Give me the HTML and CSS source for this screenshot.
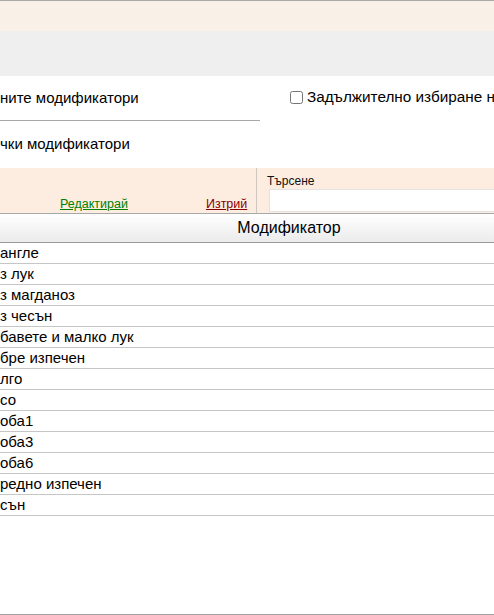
FILE: index.html
```html
<!DOCTYPE html>
<html lang="bg">
<head>
<meta charset="utf-8">
<link rel="stylesheet" href="styles.css">
</head>
<body>
<div class="page">
  <div class="topbar"></div>
  <div class="graybar"></div>
  <div class="options">
    <div class="opt-row">
      <div class="opt-left"><span class="opt-label">ните модификатори</span></div>
      <label class="opt-check"><input type="checkbox"> Задължително избиране н</label>
    </div>
    <div class="opt-row2"><span class="opt-label">чки модификатори</span></div>
  </div>
  <div class="toolbar">
    <div class="actions">
      <a class="link edit" href="#">Редактирай</a>
      <a class="link del" href="#">Изтрий</a>
    </div>
    <div class="search">
      <div class="search-label">Търсене</div>
      <input class="search-input" type="text">
    </div>
  </div>
  <div class="grid">
    <div class="grid-head">Модификатор</div>
    <div class="grid-row">англе</div>
    <div class="grid-row">з лук</div>
    <div class="grid-row">з магданоз</div>
    <div class="grid-row">з чесън</div>
    <div class="grid-row">бавете и малко лук</div>
    <div class="grid-row">бре изпечен</div>
    <div class="grid-row">лго</div>
    <div class="grid-row">со</div>
    <div class="grid-row">оба1</div>
    <div class="grid-row">оба3</div>
    <div class="grid-row">оба6</div>
    <div class="grid-row">редно изпечен</div>
    <div class="grid-row">сън</div>
    <div class="grid-empty"></div>
  </div>
</div>
</body>
</html>
```
FILE: styles.css
```css
html, body {
  margin: 0;
  padding: 0;
  background: #fff;
  overflow: hidden;
}
body {
  font-family: "Liberation Sans", Arial, sans-serif;
  color: #000;
}
.page {
  width: 578px;
  border-top: 1px solid #a8a8a8;
}
.topbar {
  height: 30px;
  background: #f9f0e8;
}
.graybar {
  height: 45px;
  background: #efefef;
}
.options {
  height: 92px;
  display: flex;
  flex-direction: column;
}
.opt-row {
  display: flex;
  align-items: flex-start;
}
.opt-left {
  width: 260px;
  height: 45px;
  border-bottom: 1px solid #a8a8a8;
  display: flex;
  align-items: center;
  box-sizing: border-box;
}
.opt-label {
  font-size: 15px;
  line-height: 18px;
}
.opt-check {
  display: flex;
  align-items: center;
  font-size: 15.3px;
  line-height: 18px;
  margin-left: 29px;
  margin-top: 12px;
  white-space: nowrap;
}
.opt-check input {
  margin: 0 4px 0 1px;
  width: 13px;
  height: 13px;
}
.opt-row2 {
  height: 46px;
  display: flex;
  align-items: center;
}
.toolbar {
  height: 45px;
  background: #fdede0;
  display: flex;
}
.actions {
  width: 257px;
  border-right: 1px solid #cfc6be;
  display: flex;
  align-items: flex-end;
  padding-bottom: 2px;
  box-sizing: border-box;
}
.link {
  font-size: 12.5px;
  line-height: 14px;
  text-decoration: underline;
}
.edit {
  color: #008000;
  margin-left: 60px;
}
.del {
  color: #8b0000;
  margin-left: 78px;
}
.search {
  flex: 1;
  padding: 6px 0 0 10px;
  display: flex;
  flex-direction: column;
}
.search-label {
  font-size: 12px;
  line-height: 14px;
  color: #111;
}
.search-input {
  margin: 1px 0 0 2px;
  height: 23px;
  box-sizing: border-box;
  border: 1px solid #e3e3e3;
  background: #fff;
  padding: 0;
  outline: none;
}
.grid {
  border-top: 1px solid #a8a8a8;
}
.grid-head {
  height: 28px;
  line-height: 28px;
  text-align: center;
  font-size: 16px;
  background: linear-gradient(#ffffff, #ebebeb);
  border-bottom: 1px solid #999;
}
.grid-row {
  height: 20px;
  line-height: 20px;
  font-size: 15px;
  border-bottom: 1px solid #c6c6c6;
  white-space: nowrap;
}
.grid-empty {
  height: 98px;
  border-bottom: 1px solid #a0a0a0;
}
```
